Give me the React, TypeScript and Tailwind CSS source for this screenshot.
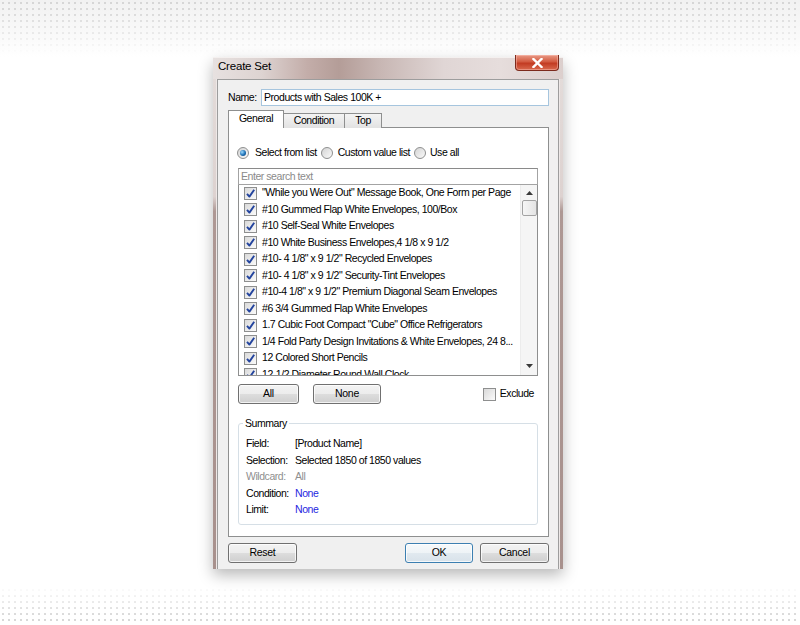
import React from 'react';

const items = [
  '"While you Were Out" Message Book, One Form per Page',
  '#10 Gummed Flap White Envelopes, 100/Box',
  '#10 Self-Seal White Envelopes',
  '#10 White Business Envelopes,4 1/8 x 9 1/2',
  '#10- 4 1/8" x 9 1/2" Recycled Envelopes',
  '#10- 4 1/8" x 9 1/2" Security-Tint Envelopes',
  '#10-4 1/8" x 9 1/2" Premium Diagonal Seam Envelopes',
  '#6 3/4 Gummed Flap White Envelopes',
  '1.7 Cubic Foot Compact "Cube" Office Refrigerators',
  '1/4 Fold Party Design Invitations & White Envelopes, 24 8...',
  '12 Colored Short Pencils',
  '12-1/2 Diameter Round Wall Clock',
];

const summary = [
  { label: 'Field:', value: '[Product Name]', tone: 'text-black', labelTone: 'text-black' },
  { label: 'Selection:', value: 'Selected 1850 of 1850 values', tone: 'text-black', labelTone: 'text-black' },
  { label: 'Wildcard:', value: 'All', tone: 'text-[#8f8f8f]', labelTone: 'text-[#8f8f8f]' },
  { label: 'Condition:', value: 'None', tone: 'text-[#1f1fe0]', labelTone: 'text-black' },
  { label: 'Limit:', value: 'None', tone: 'text-[#1f1fe0]', labelTone: 'text-black' },
];

function CheckBox({ checked }: { checked: boolean }) {
  return (
    <span className="flex h-[13px] w-[13px] shrink-0 items-center justify-center border border-[#8e8f8f] bg-[linear-gradient(135deg,#d9d9d9,#fbfbfb)]">
      {checked && (
        <svg width="11" height="11" viewBox="0 0 11 11">
          <path d="M2 5.8 L4.4 8.6 L9.2 1.8" fill="none" stroke="#23449e" strokeWidth="1.9" strokeLinejoin="round" />
        </svg>
      )}
    </span>
  );
}

function Radio({ on }: { on?: boolean }) {
  return (
    <span className="flex h-[12px] w-[12px] shrink-0 items-center justify-center rounded-full border border-[#8e8f8f] bg-[linear-gradient(135deg,#d4d4d4,#fafafa)]">
      {on && <span className="h-[6px] w-[6px] rounded-full bg-[radial-gradient(circle_at_35%_35%,#9fdcff,#1b6fb5_55%,#0b3b6e)]" />}
    </span>
  );
}

function Btn({ label, w, primary }: { label: string; w: string; primary?: boolean }) {
  return (
    <button
      className={`${w} h-[20px] rounded-[3px] border text-[10.5px] tracking-[-0.3px] text-black shadow-[inset_0_0_0_1px_rgba(255,255,255,0.75)] ${
        primary
          ? 'border-[#3c7fb1] bg-[linear-gradient(#f6f9fb,#eef3f6_50%,#e1e9ef_51%,#d8e2ea)]'
          : 'border-[#707070] bg-[linear-gradient(#f3f3f3,#ececec_50%,#dddddd_51%,#cfcfcf)]'
      }`}
    >
      {label}
    </button>
  );
}

function Arrow({ up }: { up?: boolean }) {
  return (
    <svg width="7" height="4" viewBox="0 0 7 4">
      <path d={up ? 'M0 4 L3.5 0 L7 4 Z' : 'M0 0 L3.5 4 L7 0 Z'} fill="#3a3a3a" />
    </svg>
  );
}

export default function App() {
  return (
    <div className="flex h-[625px] w-[800px] flex-col overflow-hidden bg-white font-['Liberation_Sans',Arial,sans-serif] text-[10.5px] tracking-[-0.45px] text-black">
      {/* dotted header band */}
      <div className="h-[57px] shrink-0 bg-[linear-gradient(#f1f1f1,#ffffff)]">
        <div className="h-full bg-[radial-gradient(circle,#d6d6d6_0.9px,transparent_1.5px)] bg-[length:6px_6px] [mask-image:linear-gradient(to_bottom,black_10%,transparent_95%)]" />
      </div>

      {/* window */}
      <div className="ml-[213px] flex h-[512px] w-[350px] shrink-0 flex-col shadow-[0_6px_14px_rgba(0,0,0,0.28)]">
        <div className="flex h-[22px] shrink-0 items-start justify-between border-t border-[#f4f0ef] bg-[linear-gradient(to_right,#e7e1e0_0%,#ddd3d1_14%,#c3ada9_27%,#b49d98_36%,#c8b7b4_48%,#e0d6d5_66%,#e6dddc_82%,#dccfcd_100%)]">
          <span className="pl-[5px] pt-[2px] text-[11.5px] leading-[13px] tracking-[-0.2px] text-black">Create Set</span>
          <div className="mr-[4px] -mt-[3px] flex h-[16px] w-[44px] items-center justify-center rounded-b-[4px] border border-t-0 border-[#7c2a1c] bg-[linear-gradient(#e99a86,#d25a40_45%,#c23b22_55%,#d96a4e)] shadow-[inset_0_0_0_1px_rgba(255,200,190,0.45)]">
            <svg width="11" height="10" viewBox="0 0 11 10">
              <path d="M1.5 1 L9.5 9 M9.5 1 L1.5 9" stroke="#ffffff" strokeWidth="2.4" strokeLinecap="square" />
            </svg>
          </div>
        </div>

        <div className="flex flex-1">
          <div className="w-[4px] border-r border-[#ede8e7] bg-[linear-gradient(#e3dbd9_0%,#ddd2d0_24%,#ae9894_27%,#a8918d_100%)]" />

          {/* client area */}
          <div className="flex flex-1 flex-col border border-b-0 border-[#9d9d9d] bg-[#f0f0f0] pl-[10px] pr-[9px] pt-[9px]">
            <div className="flex items-center">
              <span className="w-[33px]">Name:</span>
              <div className="flex h-[17px] flex-1 items-center border border-[#a6c5de] bg-white pl-[2px]">
                Products with Sales 100K +
              </div>
            </div>

            {/* tabs */}
            <div className="relative z-10 mt-[4px] flex h-[18px] items-end">
              <div className="flex h-[18px] w-[56px] items-center justify-center border border-b-0 border-[#8e8f8f] bg-white pb-[1px]">General</div>
              <div className="-ml-px flex h-[15px] w-[62px] items-center justify-center border border-b-0 border-[#8e8f8f] bg-[linear-gradient(#f4f4f4,#e2e2e2)]">Condition</div>
              <div className="-ml-px flex h-[15px] w-[38px] items-center justify-center border border-b-0 border-[#8e8f8f] bg-[linear-gradient(#f4f4f4,#e2e2e2)]">Top</div>
            </div>

            {/* tab panel */}
            <div className="-mt-px flex flex-col border border-[#8e8f8f] bg-white pb-[11px] pl-[9px] pr-[10px] pt-[19px]">
              <div className="-ml-px flex h-[12px] items-center">
                <Radio on />
                <span className="ml-[6px]">Select from list</span>
                <span className="ml-[4px]"><Radio /></span>
                <span className="ml-[5px]">Custom value list</span>
                <span className="ml-[4px]"><Radio /></span>
                <span className="ml-[4px]">Use all</span>
              </div>

              <div className="mt-[9px] flex h-[17px] items-center border border-[#a3a3a3] border-t-[#8a8a8a] pl-[2px] text-[#8a8a8a]">
                Enter search text
              </div>
              <div className="flex h-[191px] overflow-hidden border border-t-0 border-[#8e8f8f]">
                <div className="flex-1 overflow-hidden">
                  {items.map((it) => (
                    <div key={it} className="flex h-[16.5px] items-center whitespace-nowrap pl-[5px]">
                      <CheckBox checked />
                      <span className="ml-[5px]">{it}</span>
                    </div>
                  ))}
                </div>
                <div className="flex w-[17px] flex-col items-center border-l border-[#ececec] bg-[#f5f5f5]">
                  <div className="flex h-[15px] items-center"><Arrow up /></div>
                  <div className="h-[16px] w-[15px] rounded-[2px] border border-[#a3a3a3] bg-[linear-gradient(to_right,#f6f6f6,#e4e4e4)]" />
                  <div className="flex-1" />
                  <div className="flex h-[16px] items-center pb-[3px]"><Arrow /></div>
                </div>
              </div>

              <div className="mt-[8px] flex items-center">
                <Btn label="All" w="w-[61px]" />
                <span className="ml-[14px]"><Btn label="None" w="w-[68px]" /></span>
                <span className="ml-auto"><CheckBox checked={false} /></span>
                <span className="ml-[4px] mr-[4px]">Exclude</span>
              </div>

              <fieldset className="mt-[13px] rounded-[3px] border border-[#d6dfe6] pb-[5px] pl-[7px] pt-[7px]">
                <legend className="-ml-[3px] px-[2px] leading-[12px]">Summary</legend>
                {summary.map((r) => (
                  <div key={r.label} className="flex h-[16.5px] items-center">
                    <span className={`w-[49px] ${r.labelTone}`}>{r.label}</span>
                    <span className={r.tone}>{r.value}</span>
                  </div>
                ))}
              </fieldset>
            </div>

            <div className="mt-[6px] flex items-center">
              <Btn label="Reset" w="w-[69px]" />
              <span className="ml-auto"><Btn label="OK" w="w-[68px]" primary /></span>
              <span className="ml-[7px]"><Btn label="Cancel" w="w-[69px]" /></span>
            </div>
          </div>

          <div className="w-[4px] border-l border-[#ede8e7] bg-[linear-gradient(#e3dbd9_0%,#ddd2d0_24%,#ae9894_27%,#a8918d_100%)]" />
        </div>
      </div>

      {/* dotted footer band */}
      <div className="flex-1">
        <div className="h-full bg-[radial-gradient(circle,#d8d8d8_0.9px,transparent_1.5px)] bg-[length:6px_6px] [mask-image:linear-gradient(to_bottom,transparent_30%,black_85%)]" />
      </div>
    </div>
  );
}
